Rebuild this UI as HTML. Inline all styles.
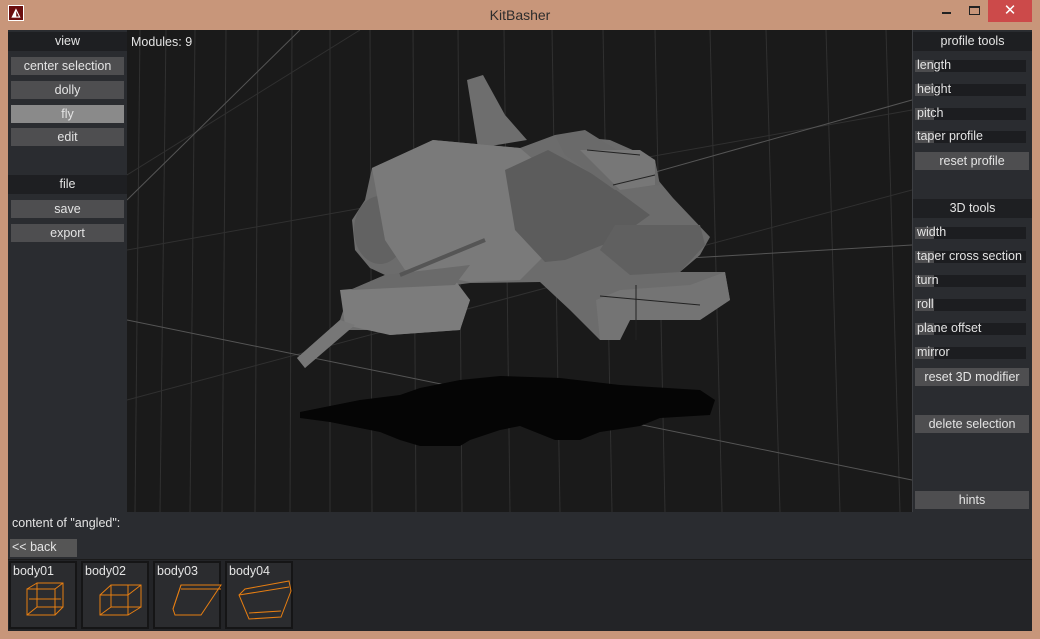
<!DOCTYPE html>
<html><head><meta charset="utf-8"><style>
*{margin:0;padding:0;box-sizing:border-box}
body{width:1040px;height:639px;background:#c8967a;position:relative;overflow:hidden;font-family:"Liberation Sans",sans-serif;font-size:12.5px;color:#e4e4e4}
.a{position:absolute}
.hdr{position:absolute;background:#1e1f22;text-align:center;line-height:19px;height:19px}
.btn{position:absolute;background:#4e4e50;text-align:center;line-height:18px;height:18px}
.sl{position:absolute;left:915px;width:111px;height:12px;background:#1c1d20}
.sl i{position:absolute;left:0;top:0;width:19px;height:12px;background:#4c4c4e}
.sl span{position:absolute;left:2px;top:-2px;white-space:nowrap;line-height:15px}
.tile{position:absolute;top:561px;width:68px;height:68px;background:#2b2c2f;border:2px solid #151516}
.tile span{position:absolute;left:2px;top:1px}
</style></head><body>
<div class="a" style="left:8px;top:5px;width:16px;height:16px;background:#6b0f0f;border:1px solid #fff;color:#fff;font-size:11px;font-weight:bold;text-align:center;line-height:14px">◭</div>
<div class="a" style="left:0;top:7px;width:1040px;text-align:center;font-size:14px;color:#2c2c2c">KitBasher</div>
<div class="a" style="left:942px;top:12px;width:9px;height:2px;background:#222"></div>
<div class="a" style="left:969px;top:6px;width:11px;height:9px;border:1px solid #222;border-top:2px solid #222"></div>
<div class="a" style="left:988px;top:0;width:44px;height:22px;background:#cc4a4a;color:#fff;text-align:center;font-size:15px;line-height:22px">✕</div>

<div class="a" style="left:8px;top:30px;width:119px;height:482px;background:#2a2c30"></div>
<div class="hdr" style="left:8px;top:32px;width:119px">view</div>
<div class="btn" style="left:11px;top:57px;width:113px">center selection</div>
<div class="btn" style="left:11px;top:81px;width:113px">dolly</div>
<div class="btn" style="left:11px;top:105px;width:113px;background:#8a8a8a">fly</div>
<div class="btn" style="left:11px;top:128px;width:113px">edit</div>
<div class="hdr" style="left:8px;top:175px;width:119px">file</div>
<div class="btn" style="left:11px;top:200px;width:113px">save</div>
<div class="btn" style="left:11px;top:224px;width:113px">export</div>

<svg class="a" style="left:127px;top:30px" width="785" height="482" viewBox="127 30 785 482">
<rect x="127" y="30" width="785" height="482" fill="#1a1a1a"/>
<g stroke="#303030" stroke-width="1">
<line x1="135" y1="512" x2="140" y2="30"/><line x1="160" y1="512" x2="166" y2="30"/><line x1="190" y1="512" x2="195" y2="30"/><line x1="222" y1="512" x2="226" y2="30"/><line x1="255" y1="512" x2="258" y2="30"/><line x1="290" y1="512" x2="292" y2="30"/><line x1="330" y1="512" x2="330" y2="30"/><line x1="372" y1="512" x2="370" y2="30"/><line x1="416" y1="512" x2="413" y2="30"/><line x1="462" y1="512" x2="458" y2="30"/><line x1="510" y1="512" x2="504" y2="30"/><line x1="560" y1="512" x2="552" y2="30"/><line x1="612" y1="512" x2="603" y2="30"/><line x1="665" y1="512" x2="655" y2="30"/><line x1="722" y1="512" x2="710" y2="30"/><line x1="780" y1="512" x2="766" y2="30"/><line x1="840" y1="512" x2="826" y2="30"/><line x1="900" y1="512" x2="886" y2="30"/>
<line x1="127" y1="250" x2="912" y2="110"/><line x1="127" y1="400" x2="912" y2="190"/><line x1="127" y1="175" x2="360" y2="30"/>
</g>
<g stroke="#555" stroke-width="1"><line x1="127" y1="320" x2="912" y2="480"/><line x1="127" y1="200" x2="300" y2="30"/><line x1="520" y1="210" x2="912" y2="100"/><line x1="655" y1="260" x2="912" y2="245"/></g>
<polygon fill="#050505" points="300,412 360,400 400,395 420,388 460,380 500,376 560,378 620,385 700,390 715,400 710,415 660,418 640,426 600,432 580,440 555,440 520,426 500,430 470,440 460,446 420,446 400,440 380,432 330,422 300,418"/>
<g stroke="none">
<polygon fill="#6e6e6e" points="467,80 483,75 505,115 527,140 478,148"/>
<polygon fill="#6c6c6c" points="372,168 433,140 520,148 555,135 610,140 655,160 658,180 673,198 710,237 700,255 680,272 725,272 730,300 700,320 630,320 620,340 600,340 570,310 540,282 470,283 455,285 470,300 460,330 390,335 372,330 340,330 305,368 297,358 340,320 350,290 385,275 370,268 355,250 352,220 365,200"/>
<ellipse cx="380" cy="230" rx="26" ry="34" fill="#626262"/>
<polygon fill="#7a7a7a" points="372,168 433,140 520,148 555,178 560,240 520,280 470,282 405,270 385,240"/>
<polygon fill="#5c5c5c" points="505,170 548,150 600,178 650,215 615,240 565,260 545,262 515,230"/>
<polygon fill="#6a6a6a" points="555,135 585,130 620,152 655,160 660,185 615,190 565,155"/>
<polygon fill="#777" points="580,150 640,150 655,160 655,185 620,190"/>
<polygon fill="#606060" points="615,225 700,225 705,245 680,272 630,275 600,250"/>
<polygon fill="#7c7c7c" points="340,290 455,280 470,300 460,330 390,335 345,325"/>
<polygon fill="#6a6a6a" points="385,275 470,265 455,285 350,290"/>
<polygon fill="#777" points="297,358 340,320 355,325 305,368"/>
<polygon fill="#747474" points="596,300 620,290 690,285 725,272 730,300 700,320 630,320 620,340 600,340"/>
</g>
<line x1="400" y1="275" x2="485" y2="240" stroke="#555" stroke-width="4"/>
<g stroke="#222" stroke-width="1"><line x1="587" y1="150" x2="640" y2="155"/><line x1="613" y1="185" x2="655" y2="175"/><line x1="636" y1="285" x2="636" y2="340"/><line x1="600" y1="296" x2="700" y2="305"/></g>
</svg>
<div class="a" style="left:131px;top:35px">Modules: 9</div>

<div class="a" style="left:912px;top:30px;width:120px;height:482px;background:#2a2c30;border-left:1px solid #3c3e42"></div>
<div class="hdr" style="left:913px;top:32px;width:119px">profile tools</div>
<div class="sl" style="top:60px"><i></i><span>length</span></div>
<div class="sl" style="top:84px"><i></i><span>height</span></div>
<div class="sl" style="top:108px"><i></i><span>pitch</span></div>
<div class="sl" style="top:131px"><i></i><span>taper profile</span></div>
<div class="btn" style="left:915px;top:152px;width:114px">reset profile</div>
<div class="hdr" style="left:913px;top:199px;width:119px">3D tools</div>
<div class="sl" style="top:227px"><i></i><span>width</span></div>
<div class="sl" style="top:251px"><i></i><span>taper cross section</span></div>
<div class="sl" style="top:275px"><i></i><span>turn</span></div>
<div class="sl" style="top:299px"><i></i><span>roll</span></div>
<div class="sl" style="top:323px"><i></i><span>plane offset</span></div>
<div class="sl" style="top:347px"><i></i><span>mirror</span></div>
<div class="btn" style="left:915px;top:368px;width:114px">reset 3D modifier</div>
<div class="btn" style="left:915px;top:415px;width:114px">delete selection</div>
<div class="btn" style="left:915px;top:491px;width:114px">hints</div>

<div class="a" style="left:8px;top:512px;width:1024px;height:119px;background:#2a2c30"></div>
<div class="a" style="left:12px;top:516px">content of "angled":</div>
<div class="a" style="left:10px;top:539px;width:67px;height:18px;background:#555;line-height:17px;padding-left:2px">&lt;&lt; back</div>
<div class="a" style="left:8px;top:559px;width:1024px;height:72px;background:#232427;border-top:1px solid #1a1a1a"></div>
<div class="tile" style="left:9px"><span>body01</span><svg class="a" style="left:14px;top:18px" width="44" height="40"><g fill="none" stroke="#e67e12" stroke-width="1"><rect x="2" y="8" width="28" height="26"/><rect x="12" y="2" width="26" height="24"/><line x1="2" y1="8" x2="12" y2="2"/><line x1="30" y1="8" x2="38" y2="2"/><line x1="2" y1="34" x2="12" y2="26"/><line x1="30" y1="34" x2="38" y2="26"/><line x1="4" y1="18" x2="36" y2="18"/></g></svg></div>
<div class="tile" style="left:81px"><span>body02</span><svg class="a" style="left:14px;top:18px" width="48" height="40"><g fill="none" stroke="#e67e12" stroke-width="1"><rect x="3" y="14" width="28" height="20"/><rect x="14" y="4" width="30" height="22"/><line x1="3" y1="14" x2="14" y2="4"/><line x1="31" y1="14" x2="44" y2="4"/><line x1="3" y1="34" x2="14" y2="26"/><line x1="31" y1="34" x2="44" y2="26"/><line x1="31" y1="4" x2="31" y2="34"/></g></svg></div>
<div class="tile" style="left:153px"><span>body03</span><svg class="a" style="left:16px;top:18px" width="52" height="40"><g fill="none" stroke="#e67e12" stroke-width="1"><polygon points="10,4 50,4 30,34 4,34 2,28"/><line x1="10" y1="8" x2="50" y2="8"/><line x1="2" y1="28" x2="10" y2="4"/></g></svg></div>
<div class="tile" style="left:225px"><span>body04</span><svg class="a" style="left:6px;top:14px" width="62" height="46"><g fill="none" stroke="#e67e12" stroke-width="1"><polygon points="12,12 56,4 58,14 48,40 16,42 6,18"/><line x1="16" y1="36" x2="48" y2="34"/><line x1="6" y1="18" x2="56" y2="10"/></g></svg></div>
</body></html>
